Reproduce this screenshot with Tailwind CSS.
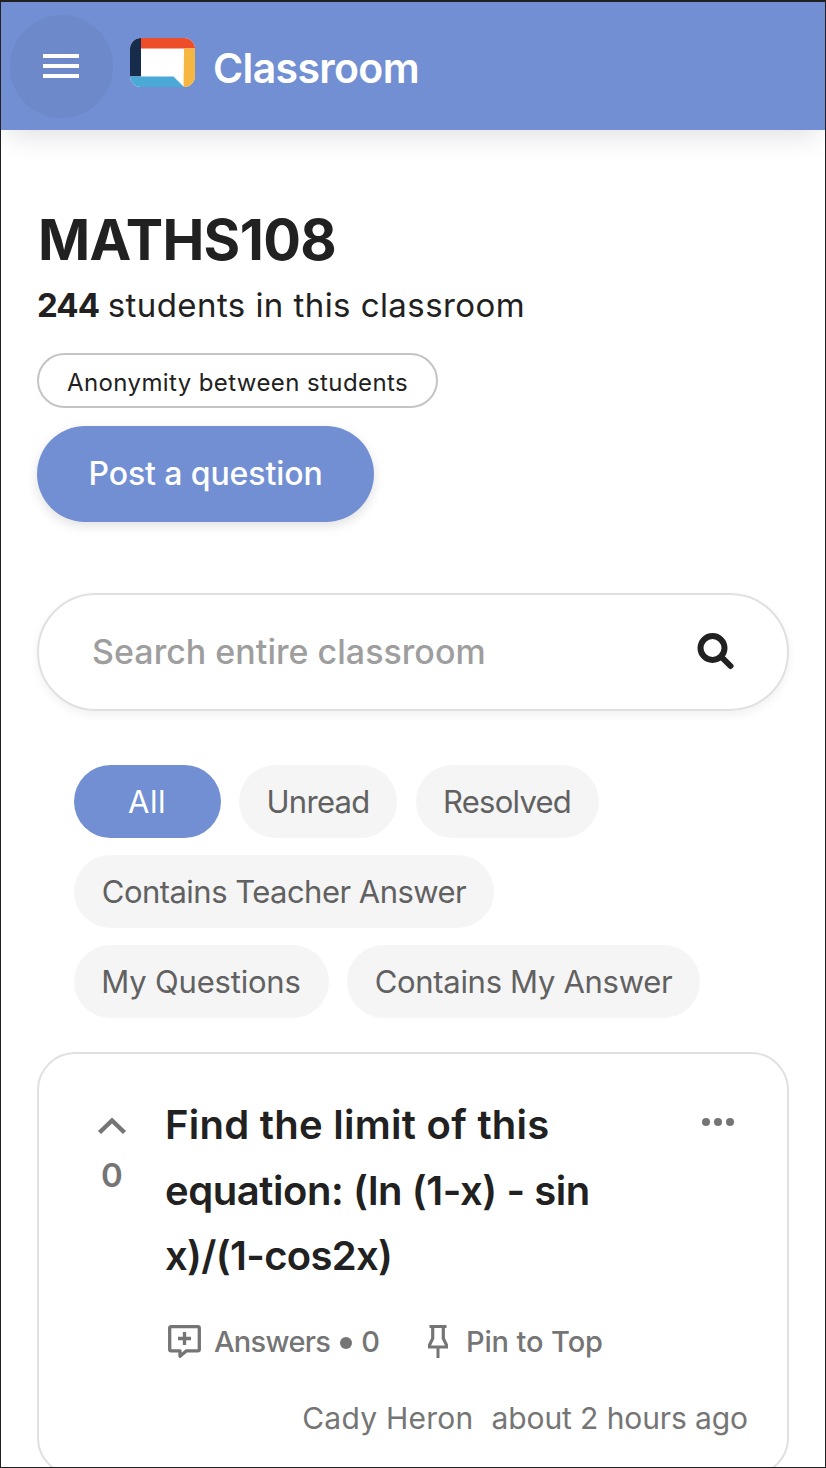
<!DOCTYPE html>
<html lang="en">
<head>
<meta charset="utf-8">
<title>Classroom</title>
<script src="https://cdn.jsdelivr.net/npm/@tailwindcss/browser@4"></script>
</head>
<body class="bg-white">
<div class="flex h-[1468px] w-[826px] flex-col overflow-hidden border border-t-2 border-[#212121] bg-white font-['Inter',sans-serif] text-[#212121]">

  <header class="z-10 flex h-32 shrink-0 items-center bg-[#728fd3] pl-[9px] shadow-[0_14px_26px_-8px_rgba(0,0,0,0.13)]">
    <button class="flex size-[103px] items-center justify-center rounded-full bg-[#6d89ca]" aria-label="Menu">
      <svg class="-ml-0.5" width="36" height="24" fill="#fff"><path d="M0 0h36v4H0zM0 10h36v4H0zM0 20h36v4H0z"/></svg>
    </button>
    <svg class="mb-2 ml-[17px]" width="65" height="49" viewBox="0 0 65 49">
      <clipPath id="logo"><rect width="65" height="49" rx="11"/></clipPath>
      <g clip-path="url(#logo)">
        <path fill="#fff" d="M0 0h65v49H0z"/>
        <path fill="#ee4d2a" d="M11 0h54v10.500H11z"/>
        <path fill="#f5b740" d="M54 10.500h11V49H53.500z"/>
        <path fill="#172b4a" d="M0 0h11v38.500H0z"/>
        <path fill="#4ba9d7" d="M0 38.500h43.500L54 49H0z"/>
      </g>
    </svg>
    <div class="ml-[18px] pt-1 text-[41px] leading-[50px] font-semibold tracking-[-0.65px] text-white">Classroom</div>
  </header>

  <main class="flex flex-col items-start px-9 pt-[78px]">
    <h1 class="ml-px text-[56px] leading-[64px] font-bold tracking-[-0.65px]">MATHS108</h1>
    <p class="mt-[13px] flex text-[33px] leading-10">
      <b class="tracking-[-0.9px]">244</b>
      <span class="ml-[8.5px] tracking-[0.43px]">students in this classroom</span>
    </p>
    <div class="mt-7 flex h-[55px] w-[401px] items-center justify-center rounded-full border-2 border-[#c4c4c4] pt-[5px] text-2xl leading-8 tracking-[0.4px]">Anonymity between students</div>
    <button class="mt-[18px] h-24 w-[337px] rounded-full bg-[#728fd3] text-[32px] leading-10 font-medium tracking-[-0.1px] text-white shadow-[0_4px_12px_rgba(0,0,0,0.12)]">Post a question</button>

    <div class="mt-[71px] flex h-[118px] w-[751.5px] items-center justify-between rounded-full border-2 border-[#e0e0e0] pr-[52px] pl-[53px] shadow-[0_4px_10px_rgba(0,0,0,0.06)]">
      <span class="text-[34px] leading-10 font-medium tracking-[0.02px] text-[#9e9e9e]">Search entire classroom</span>
      <svg class="mb-[2px]" width="38" height="38" viewBox="0 0 38 38" fill="none" stroke="#212121">
        <circle cx="15.500" cy="16" r="12" stroke-width="6"/>
        <path d="M26 26.500l7.500 7.500" stroke-width="6" stroke-linecap="round"/>
      </svg>
    </div>

    <nav class="mt-[53.5px] ml-[37px] flex flex-col gap-[17px] text-[31px] leading-10 text-[#616161]">
      <div class="flex gap-[18px]">
        <button class="h-[73px] w-[147px] rounded-full bg-[#728fd3] pt-0.5 pr-px tracking-[0.5px] text-white">All</button>
        <button class="h-[73px] w-[158px] rounded-full bg-[#f5f5f5] pt-0.5 tracking-[-0.7px]">Unread</button>
        <button class="ml-px h-[73px] w-[183px] rounded-full bg-[#f5f5f5] pt-0.5 pr-px tracking-[-0.75px]">Resolved</button>
      </div>
      <div class="flex">
        <button class="h-[73px] w-[420px] rounded-full bg-[#f5f5f5] pt-0.5 tracking-[-0.53px]">Contains Teacher Answer</button>
      </div>
      <div class="flex gap-[18px]">
        <button class="h-[73px] w-[255px] rounded-full bg-[#f5f5f5] pt-0.5 pr-px tracking-[-0.2px]">My Questions</button>
        <button class="h-[73px] w-[353px] rounded-full bg-[#f5f5f5] pt-0.5 tracking-[-0.3px]">Contains My Answer</button>
      </div>
    </nav>

    <article class="mt-[34.5px] flex h-[424px] w-[751.5px] shrink-0 rounded-[38px] border-2 border-[#e0e0e0] text-[#757575]">
      <div class="ml-[53px] flex w-10 flex-col items-center pt-[63px]">
        <svg width="30" height="18" viewBox="0 0 30 18" fill="none" stroke="#757575" stroke-width="4.500"><path d="M2.500 15.500L15 3.500l12.500 12"/></svg>
        <div class="mt-[20px] text-[33px] leading-10 font-semibold">0</div>
      </div>
      <div class="ml-[33px] flex w-[583px] flex-col pt-[38px]">
        <div class="flex justify-between">
          <h2 class="text-[40px] leading-[65.5px] font-semibold text-[#212121]">
            <span class="block tracking-[0.27px]">Find the limit of this</span>
            <span class="block tracking-[-0.43px]">equation: (ln (1-x) - sin</span>
            <span class="block tracking-[-0.69px]">x)/(1-cos2x)</span>
          </h2>
          <svg class="mt-[26px] mr-[14px]" width="32" height="8" fill="#757575"><circle cx="4" cy="4" r="4"/><circle cx="16" cy="4" r="4"/><circle cx="28" cy="4" r="4"/></svg>
        </div>
        <div class="mt-[33px] ml-[3px] flex h-10 items-center text-[29px] leading-10 font-medium">
          <svg width="33" height="33" viewBox="0 0 33 33" fill="none" stroke="#757575" stroke-width="3.300"><path d="M3 1.700h27q1.300 0 1.300 1.300v21.500q0 1.300-1.300 1.300H18.500L12 31.300v-5.500H3q-1.300 0-1.300-1.300V3q0-1.300 1.300-1.300z" stroke-linejoin="round"/><path d="M16.500 7v13M10 13.500h13"/></svg>
          <span class="ml-[13px] tracking-[-0.7px]">Answers</span>
          <span class="mt-[3px] ml-[10px] size-3 rounded-full bg-[#757575]"></span>
          <span class="ml-[9px]">0</span>
          <svg class="ml-[48px]" width="20" height="33" viewBox="0 0 20 33" fill="none" stroke="#757575"><path d="M1.500 1.500h17" stroke-width="3"/><path d="M4.700 2v11.500L1.500 20v2h17v-2l-3.200-6.500V2" stroke-width="3.200"/><path d="M10 22v11" stroke-width="3"/></svg>
          <span class="ml-[18px] tracking-[-0.1px]">Pin to Top</span>
        </div>
        <div class="mt-[36.5px] flex h-10 justify-end gap-[18px] text-[30px] leading-10">
          <span class="tracking-[0.25px]">Cady Heron</span>
          <span class="tracking-[-0.1px]">about 2 hours ago</span>
        </div>
      </div>
    </article>
  </main>
</div>
</body>
</html>
